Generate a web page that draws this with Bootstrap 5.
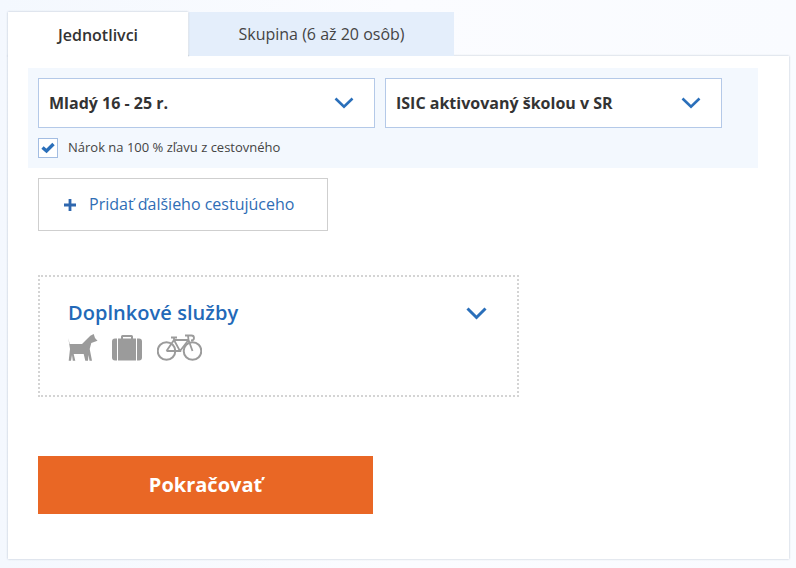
<!DOCTYPE html>
<html lang="sk">
<head>
<meta charset="utf-8">
<title>Cestujúci</title>
<link href="https://cdn.jsdelivr.net/npm/bootstrap@5.3.0/dist/css/bootstrap.min.css" rel="stylesheet">
<style>
html,body{height:100%}
body{background:linear-gradient(90deg,#f4f8fe 0,#fbfcff 50%,#f9fbff 100%);font-family:"Open Sans",sans-serif;color:#333;overflow:hidden}
.shell{padding:12px 7px 0 8px}
.tabbar{height:44px;position:relative;z-index:2}
.tabitem{height:44px;display:flex;align-items:center;justify-content:center;font-size:16px;color:#444}
.tabitem.on{width:180px;height:45px;background:#fff;font-weight:600;color:#333;box-shadow:0 0 2px rgba(60,80,110,.35);clip-path:inset(-3px -3px 0 -3px)}
.tabitem.off{width:265px;margin-left:1px;background:#e4eefb}
.panel{height:503px;background:#fff;box-shadow:0 0 2px rgba(60,80,110,.35);padding:12px 31px 0 20px}
.band{background:#f3f8fe;height:100px;padding:10px 10px 0}
.pick{height:50px;width:337px;background:#fff;border:1px solid #b4c9e8;font-size:16px;font-weight:700;color:#333;padding:0 20px 0 10px}
.tick{width:20px;height:20px;background:#fff;border:1px solid #a3bde2;flex:none}
.ticktext{font-size:13px;color:#444;margin-left:10px;line-height:18px}
.addbtn{width:290px;height:53px;margin:10px 0 0 10px;border:1px solid #cfcfcf;background:#fff;color:#2f6db5;font-size:16px;padding:0 0 2px 25px;border-radius:0}
.addbtn svg{margin:2px 13px 0 0}
.extras{width:481px;height:122px;margin:44px 0 0 10px;border:2px dotted #d4d4d4;padding:21px 30px 0 28px}
.extratitle{font-size:20px;font-weight:600;color:#2369b8;line-height:30px;margin:0;letter-spacing:.05px}
.iconrow{margin-top:6px;gap:15px}
.iconrow svg{display:block}
.iconrow svg:first-child{margin-right:-1px}
.gobtn{display:block;width:335px;height:58px;margin:59px 0 0 10px;background:#e96725;border:0;border-radius:0;color:#fff;font-size:20px;font-weight:700;padding:0}
.gobtn:hover{background:#e96725;color:#fff}
</style>
</head>
<body>
<div class="shell">
  <div class="tabbar d-flex">
    <div class="tabitem on">Jednotlivci</div>
    <div class="tabitem off">Skupina (6 až 20 osôb)</div>
  </div>
  <div class="panel">
    <div class="band">
      <div class="d-flex" style="gap:10px">
        <div class="pick d-flex align-items-center justify-content-between">
          <span>Mladý 16 - 25 r.</span>
          <svg width="20" height="12" viewBox="0 0 20 12"><path d="M1.500 1.500 10 9.800 18.500 1.500" fill="none" stroke="#2a6fba" stroke-width="2.600"/></svg>
        </div>
        <div class="pick d-flex align-items-center justify-content-between">
          <span>ISIC aktivovaný školou v SR</span>
          <svg width="20" height="12" viewBox="0 0 20 12"><path d="M1.500 1.500 10 9.800 18.500 1.500" fill="none" stroke="#2a6fba" stroke-width="2.600"/></svg>
        </div>
      </div>
      <div class="d-flex align-items-start" style="margin-top:10px">
        <div class="tick d-flex align-items-center justify-content-center">
          <svg width="14" height="12" viewBox="0 0 14 12"><path d="M1.500 5.500 5.500 9 12.500 2" fill="none" stroke="#2a6fba" stroke-width="3.400"/></svg>
        </div>
        <span class="ticktext">Nárok na 100 % zľavu z cestovného</span>
      </div>
    </div>
    <button type="button" class="btn addbtn d-flex align-items-center">
      <svg width="12" height="12" viewBox="0 0 12 12"><path d="M4.600 0h2.800v4.600H12v2.800H7.400V12H4.600V7.400H0V4.600h4.600z" fill="#2f67ae"/></svg>
      <span>Pridať ďalšieho cestujúceho</span>
    </button>
    <div class="extras">
      <div class="d-flex align-items-center justify-content-between">
        <p class="extratitle">Doplnkové služby</p>
        <svg width="21" height="13" viewBox="0 0 21 13"><path d="M1.500 1.500 10.500 10.500 19.500 1.500" fill="none" stroke="#2a6fba" stroke-width="3"/></svg>
      </div>
      <div class="iconrow d-flex align-items-center">
        <svg width="30" height="27" viewBox="0 0 30 27"><path d="M.3 4 1.700 10H14L22.300 1.700 25.700 0 27 4 29.500 6.700 23.300 9 21.700 15 24 26.700H21.500L20.500 21 20 26.700H17.300L15.700 20H5.700L7.300 26.700H4.800L4 21 3 26.700H.7L2 15z" fill="#9b9b9b"/></svg>
        <svg width="30" height="27" viewBox="0 0 30 27"><path d="M9 5V2.500Q9 1 10.500 1h9Q21 1 21 2.500V5h-2V3h-8v2z" fill="#9b9b9b"/><path d="M3 4.500h2V26.500H3Q0 26.500 0 23.500V7.500Q0 4.500 3 4.500zM6 4.500H24V26.500H6zM25 4.500h2q3 0 3 3v16q0 3-3 3h-2z" fill="#9b9b9b"/></svg>
        <svg width="45" height="27" viewBox="0 0 45 27" fill="none" stroke="#9b9b9b"><circle cx="9.500" cy="17" r="8.800" stroke-width="2"/><circle cx="35.500" cy="17" r="8.800" stroke-width="2"/><path d="M9.500 17 17 6H31.500L35.500 17M17 6 23 17H9.500M23 17 31.500 6M14 3.500h6M17 3.500 17 6M28 1.500h6.500Q37 1.500 37 4T34 6.500M31 1.500 31.500 6" stroke-width="1.800"/></svg>
      </div>
    </div>
    <button type="button" class="btn gobtn">Pokračovať</button>
  </div>
</div>
<script src="https://cdn.jsdelivr.net/npm/bootstrap@5.3.0/dist/js/bootstrap.bundle.min.js"></script>
</body>
</html>
